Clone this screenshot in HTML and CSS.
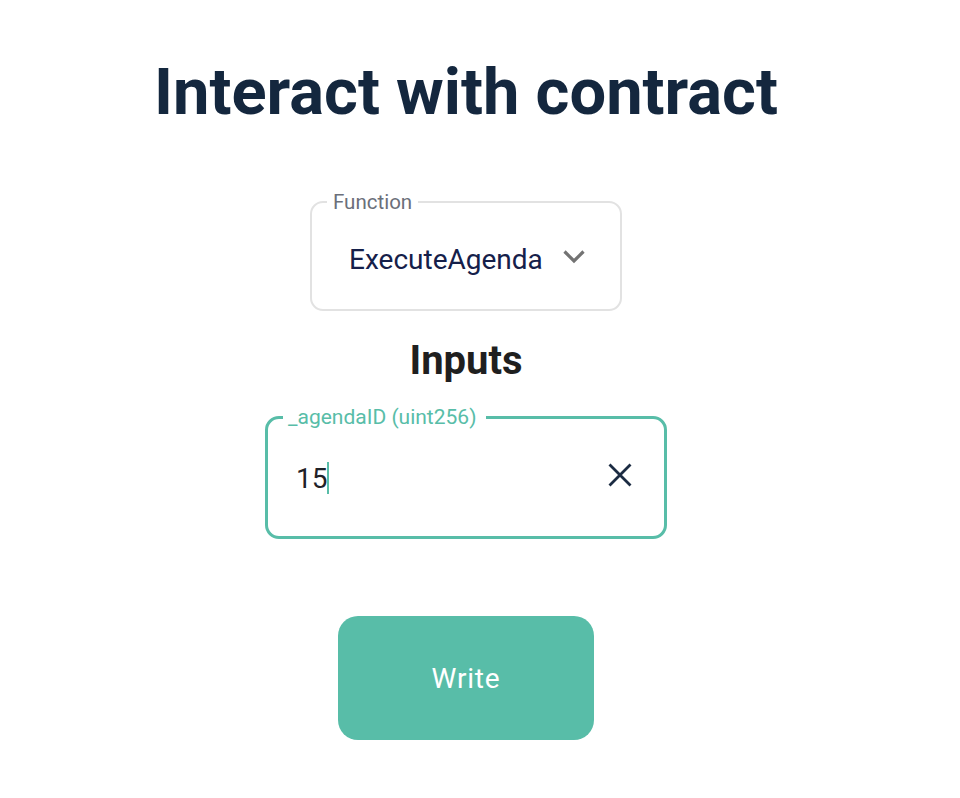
FILE: index.html
```html
<!DOCTYPE html>
<html>
<head>
<meta charset="utf-8">
<link rel="stylesheet" href="styles.css">
</head>
<body>
<main class="page">
  <h1 class="title">Interact with contract</h1>
  <fieldset class="select-field">
    <legend class="select-label">Function</legend>
    <div class="select-row">
      <span class="select-value">ExecuteAgenda</span>
      <svg class="chevron" width="24" height="15" viewBox="0 0 24 15"><path d="M2.5 2.5 L12 12 L21.5 2.5" fill="none" stroke="#737373" stroke-width="3.2"/></svg>
    </div>
  </fieldset>
  <h2 class="subtitle">Inputs</h2>
  <fieldset class="input-field">
    <legend class="input-label">_agendaID (uint256)</legend>
    <div class="input-row">
      <span class="input-value">15</span><span class="caret"></span>
      <svg class="clear" width="24" height="24" viewBox="0 0 24 24"><path d="M1.5 1.5 L22.5 22.5 M22.5 1.5 L1.5 22.5" fill="none" stroke="#1b2b42" stroke-width="2.8"/></svg>
    </div>
  </fieldset>
  <button class="write-btn">Write</button>
</main>
</body>
</html>
```
FILE: styles.css
```css
* { box-sizing: border-box; }
html, body { margin: 0; padding: 0; background: #ffffff; }
body { font-family: Roboto, "Noto Sans", sans-serif; }
.page {
  width: 932px;
  display: flex;
  flex-direction: column;
  align-items: center;
  padding-top: 50px;
}
.title {
  margin: 0;
  font-size: 65px;
  font-weight: 700;
  line-height: 84px;
  color: #14273e;
}
.select-field {
  margin: 56px 0 0 0;
  width: 312px;
  height: 121px;
  border: 2px solid #e2e2e2;
  border-radius: 13px;
  padding: 0 0 0 15px;
  min-width: 0;
}
.select-label {
  font-size: 20.5px;
  color: #6b6f7a;
  padding: 0 6px;
  line-height: 24px;
}
.select-row {
  display: flex;
  align-items: center;
  gap: 19px;
  padding-left: 22px;
  padding-top: 29px;
  height: 63px;
}
.select-value {
  font-size: 28px;
  color: #15204a;
  line-height: 34px;
}
.chevron { display: block; margin-top: -7px; }
.subtitle {
  margin: 26px 0 0 0;
  font-size: 40px;
  font-weight: 700;
  line-height: 48px;
  color: #1f1f1f;
}
.input-field {
  margin: 20px 0 0 0;
  width: 402px;
  height: 134px;
  border: 3px solid #58bda8;
  border-radius: 14px;
  padding: 0 0 0 15px;
  min-width: 0;
}
.input-label {
  font-size: 21px;
  color: #58bda8;
  padding: 0 10px 0 5px;
  line-height: 25px;
}
.input-row {
  display: flex;
  align-items: center;
  padding-left: 13px;
  padding-right: 32px;
  padding-top: 33px;
}
.input-value {
  font-size: 28px;
  color: #1f2228;
  line-height: 32px;
}
.caret {
  width: 2px;
  height: 32px;
  background: #58bda8;
  margin-top: -2px;
}
.clear { margin-left: auto; display: block; margin-top: -8px; }
.write-btn {
  margin-top: 77px;
  width: 256px;
  height: 124px;
  border: none;
  border-radius: 20px;
  background: #58bda8;
  color: #ffffff;
  font-family: Roboto, "Noto Sans", sans-serif;
  font-size: 28px;
  letter-spacing: 0.8px;
}
```
